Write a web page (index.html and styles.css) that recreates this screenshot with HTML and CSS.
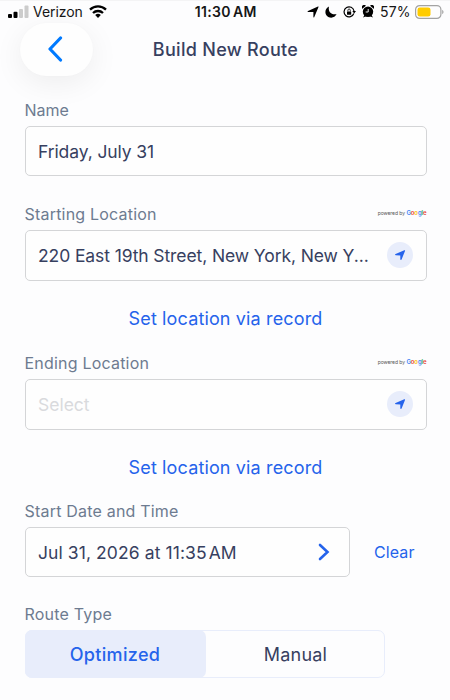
FILE: index.html
```html
<!DOCTYPE html>
<html lang="en">
<head>
<meta charset="utf-8">
<title>Build New Route</title>
<link rel="stylesheet" href="styles.css">
</head>
<body>
<div class="status">
  <div class="carrier">
    <svg class="signal" width="21" height="13" viewBox="0 0 21 13"><rect x="0" y="9" width="4" height="4" rx="1"/><rect x="5.5" y="6.8" width="4" height="6.2" rx="1"/><rect class="off" x="11" y="4" width="4" height="9" rx="1"/><rect class="off" x="16.5" y="0.5" width="4" height="12.5" rx="1"/></svg>
    <span class="carrier-name">Verizon</span>
    <svg class="wifi" width="18" height="13" viewBox="0 0 18 13"><g fill="none" stroke="#000" stroke-width="2.3"><path d="M1 4.6a11.4 11.4 0 0 1 16 0"/><path d="M4 8a7.2 7.2 0 0 1 10 0"/></g><path d="M9 13 6.2 10.1a4 4 0 0 1 5.6 0z"/></svg>
  </div>
  <div class="clock">11:30 AM</div>
  <div class="indicators">
    <svg width="12" height="12" viewBox="0 0 12 12"><path d="M11 .6C11.5.3 11.8.6 11.500 1.100L7.200 11.200c-.2.500-.8.400-.8-.1V6H1.200C.5 6 .4 5.300 1 5z"/></svg>
    <svg width="12" height="12" viewBox="0 0 12 12"><path d="M4 .4C2.700 5.500 6.500 9.300 11.600 8.100 10.500 10.400 8.500 11.700 6.200 11.700 3 11.700.4 9.200.4 6 .4 3.400 1.800 1.300 4 .4z"/></svg>
    <svg width="13" height="12" viewBox="0 0 13 12"><path d="M10.800 7.500A5 5 0 1 1 11 5" fill="none" stroke="#000" stroke-width="1.200"/><path d="M9.300 5h3.700l-1.800 2.500z"/><rect x="4" y="5.400" width="4.200" height="3.300" rx=".5"/><path d="M4.900 5.500V4.200a1.200 1.200 0 0 1 2.400 0v1.300" fill="none" stroke="#000" stroke-width=".8"/></svg>
    <svg width="12" height="13" viewBox="0 0 12 13"><circle cx="6" cy="6.700" r="5.200"/><path d="M.3 3.800A2.200 2.200 0 0 1 3.900.8zM11.700 3.800A2.200 2.200 0 0 0 8.100.8zM1 12.600l1.800-3 2 1.300zM11 12.600 9.200 9.600l-2 1.300z"/><path d="M6.200 4v3H3.700" fill="none" stroke="#fff" stroke-width=".9"/></svg>
    <span class="percent">57%</span>
    <svg class="battery" width="29" height="14" viewBox="0 0 29 14"><rect x=".6" y=".6" width="25.300" height="12.800" rx="4" fill="none" stroke="#a3a3a3" stroke-width="1.200"/><rect x="2.500" y="2.500" width="13" height="9" rx="2.300" fill="#fc0"/><path d="M27.200 4.800c1.800.7 1.800 3.700 0 4.400z" fill="#a3a3a3"/></svg>
  </div>
</div>
<header class="nav">
  <button class="back" aria-label="Back"><svg width="16" height="26" viewBox="0 0 16 26"><path d="M13.500 2 3 13l10.500 11" fill="none" stroke="#007aff" stroke-width="3.200" stroke-linecap="round" stroke-linejoin="round"/></svg></button>
  <h1>Build New Route</h1>
</header>
<main class="form">
  <section class="group name">
    <div class="label"><span>Name</span></div>
    <div class="field"><span class="v-name">Friday, July 31</span></div>
  </section>
  <section class="group start">
    <div class="label"><span class="wide">Starting Location</span><span class="powered">powered by <b><i class="gb">G</i><i class="gr">o</i><i class="gy">o</i><i class="gb">g</i><i class="gg">l</i><i class="gr">e</i></b></span></div>
    <div class="field"><span class="v-start">220 East 19th Street, New York, New Y...</span><span class="locate"><svg width="12" height="12" viewBox="0 0 12 12"><path d="M10.300 1.200c.6-.2 1 .1.700.7L7.600 10.500c-.3.700-1.300.6-1.300-.2V6.500L1.800 6.200c-.9-.1-1-1-.2-1.300z"/></svg></span></div>
    <a class="record">Set location via record</a>
  </section>
  <section class="group end">
    <div class="label"><span class="wide">Ending Location</span><span class="powered">powered by <b><i class="gb">G</i><i class="gr">o</i><i class="gy">o</i><i class="gb">g</i><i class="gg">l</i><i class="gr">e</i></b></span></div>
    <div class="field"><span class="placeholder">Select</span><span class="locate"><svg width="12" height="12" viewBox="0 0 12 12"><path d="M10.300 1.200c.6-.2 1 .1.700.7L7.600 10.500c-.3.700-1.300.6-1.300-.2V6.500L1.800 6.200c-.9-.1-1-1-.2-1.300z"/></svg></span></div>
    <a class="record">Set location via record</a>
  </section>
  <section class="group date">
    <div class="label"><span class="wide">Start Date and Time</span></div>
    <div class="row">
      <div class="field"><span class="v-date">Jul 31, 2026 at 11:35<span class="thin"></span>AM</span><svg class="chevron" width="12" height="18" viewBox="0 0 12 18"><path d="m2 2 7.500 7L2 16" fill="none" stroke="#2563eb" stroke-width="2.600" stroke-linecap="round" stroke-linejoin="miter"/></svg></div>
      <a class="clear">Clear</a>
    </div>
  </section>
  <section class="group type">
    <div class="label"><span class="wide">Route Type</span></div>
    <div class="segments"><div class="segment selected"><span>Optimized</span></div><div class="segment manual"><span>Manual</span></div></div>
  </section>
</main>
</body>
</html>
```
FILE: styles.css
```css
* { box-sizing: border-box; }
body {
  margin: 0;
  height: 700px;
  overflow: hidden;
  background: #fdfdfe;
  border-top: 1px solid #f4f4f5;
  font-family: Inter, "Liberation Sans", sans-serif;
  color: #374060;
}
svg { display: block; flex: none; }
.status {
  height: 21px;
  display: grid;
  grid-template-columns: 1fr auto 1fr;
  align-items: center;
  padding: 0 6px 0 7.500px;
  color: #161616;
  font-size: 14px;
  line-height: 20px;
  white-space: nowrap;
}
.carrier { display: flex; align-items: center; }
.carrier-name { margin-left: 4.500px; width: 51px; letter-spacing: -0.05px; }
.wifi { margin-left: 5px; }
.signal .off { fill: #ccc; }
.clock { font-weight: 600; font-size: 14px; letter-spacing: 0.3px; word-spacing: -1.500px; }
.indicators { display: flex; align-items: center; justify-content: flex-end; gap: 6px; }
.percent { letter-spacing: 0.1px; }
.battery { margin-left: -1.500px; }
.nav {
  height: 78px;
  display: grid;
  grid-template-columns: 73px 1fr 73px;
  padding: 1px 19px 0 20px;
}
.back {
  width: 73px;
  height: 53px;
  border: 0;
  padding: 0 3px 2px 0;
  border-radius: 27px;
  background: #fefefe;
  box-shadow: 0 7px 30px rgba(0,0,0,.065), 0 0 2px rgba(0,0,0,.02);
  display: flex;
  align-items: center;
  justify-content: center;
}
h1 { margin: 0; text-align: center; font-size: 18px; line-height: 54px; font-weight: 500; letter-spacing: 0.3px; }
.form { padding: 0 23.500px 0 24.500px; }
.label {
  height: 26px;
  display: flex;
  justify-content: space-between;
  font-size: 16px;
  line-height: 20px;
  color: #6d7b90;
}
.wide { letter-spacing: 0.2px; }
.field {
  height: 50px;
  border: 1px solid #d4d5d7;
  border-radius: 5px;
  display: flex;
  align-items: center;
  justify-content: space-between;
  padding: 0 12.500px;
  font-size: 17.500px;
  white-space: nowrap;
  background: #fefefe;
}
.v-name { letter-spacing: -0.1px; }
.v-start { letter-spacing: -0.1px; }
.v-date { letter-spacing: 0.09px; }
.group.name { height: 104px; }
.start .field, .end .field { height: 50.500px; }
.group.start { height: 149px; }
.group.end { height: 148px; }
.group.date { height: 103px; }
.powered { font-size: 5px; line-height: 18px; letter-spacing: -0.05px; color: #555; white-space: nowrap; }
.powered b { font-size: 6px; font-weight: 600; letter-spacing: -0.1px; }
.powered i { font-style: normal; }
.gb { color: #4285f4; } .gr { color: #ea4335; } .gy { color: #fbbc05; } .gg { color: #34a853; }
.locate { width: 26px; height: 26px; border-radius: 50%; background: #e8edfb; display: grid; place-items: center; }
.locate svg { fill: #2563eb; }
.placeholder { color: #d9dadd; }
.record { display: block; text-align: center; margin-top: 25.500px; line-height: 26px; font-size: 18px; letter-spacing: 0.14px; color: #2563eb; }
.row { display: flex; align-items: center; }
.row .field { width: 325.500px; padding-right: 19.500px; }
.thin { display: inline-block; width: 2px; }
.clear { margin-left: 24px; font-size: 16px; letter-spacing: 0.1px; color: #2563eb; }
.segments { width: 360px; height: 48px; border: 1px solid #e8edfb; border-radius: 7px; display: flex; font-size: 18px; background: #fdfdfe; }
.segment { display: grid; place-items: center; flex: 1; }
.manual { letter-spacing: 0.2px; padding-left: 2px; }
.selected { flex: none; width: 181px; margin: -1px 0 -1px -1px; background: #e8edfb; border-radius: 7px; color: #2563eb; font-weight: 500; letter-spacing: 0.35px; }
```
